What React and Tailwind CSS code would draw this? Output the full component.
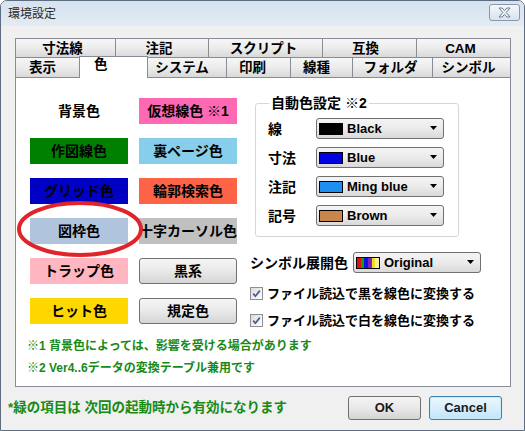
import React from "react";

function CBox({ cls, children }) {
  return (
    <div className={"h-[26px] flex items-center justify-center whitespace-nowrap text-[14px] font-bold leading-[16px] text-black " + cls}>
      {children}
    </div>
  );
}

function WinBtn({ children }) {
  return (
    <div className="h-[26px] flex items-center justify-center whitespace-nowrap rounded-[3px] border border-[#707070] bg-linear-to-b from-[#f5f5f5] via-[#e9e9e9] to-[#d5d5d5] text-[14px] font-bold leading-[16px] text-black">
      {children}
    </div>
  );
}

function Arrow() {
  return (
    <svg width="8" height="5" viewBox="0 0 8 5" className="shrink-0">
      <polygon points="0,0 7,0 3.5,4" fill="#000" />
    </svg>
  );
}

function Combo({ w, swatch, label }) {
  return (
    <div className={"h-[21px] flex items-center rounded-[3px] border border-[#707070] bg-linear-to-b from-[#f4f4f4] via-[#ebebeb] to-[#d9d9d9] pl-[2px] pr-[5px] " + w}>
      {swatch}
      <span className="ml-[4px] flex-1 text-[13px] font-bold leading-[15px] text-black">{label}</span>
      <Arrow />
    </div>
  );
}

function Swatch({ cls }) {
  return <div className={"w-[24px] h-[12px] border border-black shrink-0 " + cls} />;
}

function Check({ children }) {
  return (
    <div className="h-[20px] flex items-center">
      <div className="w-[13px] h-[13px] border border-[#8f8f8f] bg-linear-to-br from-[#dcdcdc] to-[#ffffff] flex items-center justify-center shrink-0">
        <svg width="11" height="11" viewBox="0 0 11 11">
          <path d="M2.2 5.6 L4.4 8.2 L8.8 2.6" stroke="#4a5d8f" strokeWidth="1.7" fill="none" />
        </svg>
      </div>
      <span className="ml-[4px] text-[13px] font-bold leading-[15px] text-black whitespace-nowrap">{children}</span>
    </div>
  );
}

function Tab({ w, children, cls = "" }) {
  return (
    <div className={"h-full flex items-center justify-center border-t border-[#898c95] bg-linear-to-b from-[#f6f6f6] via-[#ececec] to-[#d9d9d9] text-[13.5px] font-bold leading-[15px] text-black whitespace-nowrap " + w + " " + cls}>
      {children}
    </div>
  );
}

export default function App() {
  return (
    <div className="w-[525px] h-[431px] relative flex flex-col overflow-hidden rounded-t-[7px] border border-[#5d6c7e] bg-[#eff1f4] font-['Liberation_Sans','Noto_Sans_CJK_JP',sans-serif]">
      {/* title bar */}
      <div className="h-[25px] shrink-0 flex items-center justify-between pl-[7px] pr-[4px] bg-linear-to-b from-[#d5e2f0] to-[#e3ebf4]">
        <span className="text-[12px] leading-[14px] text-[#2a2a2a]">環境設定</span>
        <div className="w-[31px] h-[17px] mt-[-2px] rounded-[3px] border border-[#8a98ab] bg-linear-to-b from-[#f4f7fb] to-[#d9e2ee] flex items-center justify-center">
          <svg width="13" height="11" viewBox="0 0 13 11">
            <path d="M1 1 H4.2 L6.5 3.6 L8.8 1 H12 L8.2 5.5 L12 10 H8.8 L6.5 7.4 L4.2 10 H1 L4.8 5.5 Z" fill="#eef2f7" stroke="#6f7c8e" strokeWidth="1" strokeLinejoin="round" />
          </svg>
        </div>
      </div>

      {/* body */}
      <div className="flex-1 flex flex-col bg-[#f0f0f0]">
        <div className="pt-[12px] pl-[14px]">
          {/* tabs row 1 */}
          <div className="flex h-[19px] w-[496px]">
            <Tab w="w-[100px]" cls="border-l pr-[6px]">寸法線</Tab>
            <Tab w="w-[93px]" cls="border-l pr-[6px]">注記</Tab>
            <Tab w="w-[114px]" cls="border-l pr-[4px]">スクリプト</Tab>
            <Tab w="w-[94px]" cls="border-l pr-[8px]">互換</Tab>
            <Tab w="flex-1" cls="border-l border-r pr-[6px]">CAM</Tab>
          </div>
          {/* tabs row 2 */}
          <div className="flex h-[20px] w-[496px] items-start">
            <Tab w="w-[64px]" cls="border-l pr-[10px]">表示</Tab>
            <div className="relative z-10 w-[69px] h-[22px] mt-[-1px] flex items-start pl-[14px] border-l border-r border-t border-[#898c95] bg-white text-[13.5px] font-bold leading-[15px] text-black">
              色
            </div>
            <Tab w="w-[78px]" cls="pr-[10px]">システム</Tab>
            <Tab w="w-[64px]" cls="border-l pr-[12px]">印刷</Tab>
            <Tab w="w-[62px]" cls="border-l pr-[10px]">線種</Tab>
            <Tab w="w-[80px]" cls="border-l pr-[4px]">フォルダ</Tab>
            <Tab w="flex-1" cls="border-l border-r pr-[6px]">シンボル</Tab>
          </div>

          {/* panel */}
          <div className="w-[496px] h-[310px] border border-[#898c95] bg-white flex flex-col">
            <div className="flex pt-[20px] pl-[14px]">
              {/* left grid */}
              <div className="relative grid grid-cols-[98px_98px] gap-x-[11px] gap-y-[14px] w-[207px] self-start">
                <CBox cls="bg-white">背景色</CBox>
                <CBox cls="bg-[#ff69b4]">仮想線色 ※1</CBox>
                <CBox cls="bg-[#008000]">作図線色</CBox>
                <CBox cls="bg-[#87ceeb]">裏ページ色</CBox>
                <CBox cls="bg-[#0000c4]">グリッド色</CBox>
                <CBox cls="bg-[#ff6347]">輪郭検索色</CBox>
                <CBox cls="bg-[#b0c4de]">図枠色</CBox>
                <CBox cls="bg-[#c0c0c0]">十字カーソル色</CBox>
                <CBox cls="bg-[#ffb6c1]">トラップ色</CBox>
                <WinBtn>黒系</WinBtn>
                <CBox cls="bg-[#ffd700]">ヒット色</CBox>
                <WinBtn>規定色</WinBtn>
                <svg className="absolute left-[-14px] top-[102px] pointer-events-none" width="132" height="60" viewBox="0 0 132 60">
                  <ellipse cx="64" cy="29" rx="61" ry="26" fill="none" stroke="#e0242a" strokeWidth="4" />
                </svg>
              </div>

              {/* right column */}
              <div className="ml-[13px] flex flex-col">
                <fieldset className="ml-[5px] mt-[-3px] w-[204px] border border-[#d3d8dd] rounded-[3px] pb-[10px] pl-[12px] pt-[7px]">
                  <legend className="ml-[1px] px-[2px] text-[14px] font-bold leading-[16px] text-black">自動色設定 ※2</legend>
                  <div className="flex flex-col gap-[8px]">
                    <div className="flex items-center">
                      <span className="w-[48px] text-[14px] font-bold leading-[16px]">線</span>
                      <Combo w="w-[128px]" swatch={<Swatch cls="bg-black" />} label="Black" />
                    </div>
                    <div className="flex items-center">
                      <span className="w-[48px] text-[14px] font-bold leading-[16px]">寸法</span>
                      <Combo w="w-[128px]" swatch={<Swatch cls="bg-[#0000e0]" />} label="Blue" />
                    </div>
                    <div className="flex items-center">
                      <span className="w-[48px] text-[14px] font-bold leading-[16px]">注記</span>
                      <Combo w="w-[128px]" swatch={<Swatch cls="bg-[#1e8ff0]" />} label="Ming blue" />
                    </div>
                    <div className="flex items-center">
                      <span className="w-[48px] text-[14px] font-bold leading-[16px]">記号</span>
                      <Combo w="w-[128px]" swatch={<Swatch cls="bg-[#c8864c]" />} label="Brown" />
                    </div>
                  </div>
                </fieldset>

                <div className="mt-[15px] flex items-center">
                  <span className="w-[103px] text-[14px] font-bold leading-[16px] whitespace-nowrap">シンボル展開色</span>
                  <Combo
                    w="w-[128px]"
                    swatch={
                      <div className="w-[24px] h-[12px] border border-black shrink-0 flex">
                        <div className="flex-1 bg-[#e01010]" />
                        <div className="flex-1 bg-[#10a010]" />
                        <div className="flex-1 bg-[#1010e0]" />
                        <div className="flex-1 bg-[#8020c0]" />
                        <div className="flex-1 bg-[#f0e020]" />
                        <div className="flex-1 bg-[#f8f0a0]" />
                      </div>
                    }
                    label="Original"
                  />
                </div>

                <div className="mt-[10px] flex flex-col gap-[7px]">
                  <Check>ファイル読込で黒を線色に変換する</Check>
                  <Check>ファイル読込で白を線色に変換する</Check>
                </div>
              </div>
            </div>

            <div className="mt-[5px] pl-[11px] flex flex-col text-[12px] font-bold leading-[22px] text-[#178a17]">
              <span>※1 背景色によっては、影響を受ける場合があります</span>
              <span>※2 Ver4..6データの変換テーブル兼用です</span>
            </div>
          </div>
        </div>

        {/* footer */}
        <div className="mt-[9px] h-[24px] flex items-center pl-[7px] pr-[22px]">
          <span className="flex-1 text-[13.5px] font-bold leading-[16px] text-[#178a17] whitespace-nowrap">*緑の項目は 次回の起動時から有効になります</span>
          <div className="w-[73px] h-[24px] rounded-[3px] border border-[#707070] bg-linear-to-b from-[#f4f4f4] via-[#e9e9e9] to-[#d4d4d4] flex items-center justify-center text-[13px] font-bold text-[#1a1a1a]">
            OK
          </div>
          <div className="ml-[8px] w-[73px] h-[24px] rounded-[3px] border border-[#3c7fb1] bg-linear-to-b from-[#ecf7fd] via-[#d9effc] to-[#bfe4fb] shadow-[inset_0_0_0_1px_#c8ecfc] flex items-center justify-center text-[13px] font-bold text-[#1a1a1a]">
            Cancel
          </div>
        </div>
      </div>
    </div>
  );
}
